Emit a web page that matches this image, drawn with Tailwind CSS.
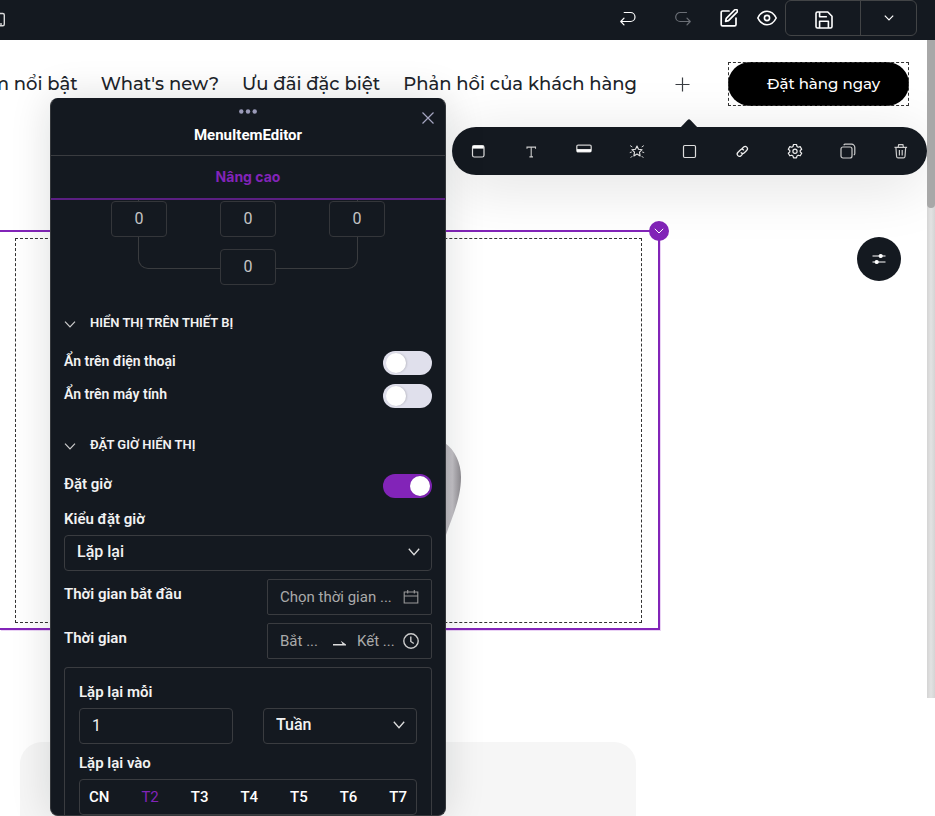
<!DOCTYPE html>
<html lang="vi">
<head>
<meta charset="utf-8">
<meta name="viewport" content="width=device-width, initial-scale=1">
<title>MenuItemEditor</title>
<script src="https://cdn.jsdelivr.net/npm/@tailwindcss/browser@4"></script>
</head>
<body class="relative flex h-screen flex-col overflow-hidden bg-white font-['Roboto',sans-serif] text-[#20242a]">

<!-- Top bar -->
<header class="flex h-10 shrink-0 items-center justify-between bg-[#141920] pr-[18px] text-white">
  <button type="button" aria-label="Thiết bị" class="-ml-4">
    <svg class="block h-4 w-[21px]" viewBox="0 0 21 16" fill="none" stroke="#d9d9d9" stroke-width="1.4"><rect x="8" y="1.500" width="12.3" height="12.3" rx="1.5"/><path d="M17 11v2"/></svg>
  </button>
  <div class="flex h-full items-start">
    <div class="flex h-9 items-center">
      <button type="button" aria-label="Hoàn tác" class="mr-[39px]">
        <svg class="block size-4" viewBox="0 0 16 16" fill="none" stroke="#fff" stroke-width="1.2" stroke-linecap="round" stroke-linejoin="round"><path d="M4.2 2.500h6.3a4.5 4.5 0 0 1 0 9H.8M4 8.2.8 11.5 4 14.8"/></svg>
      </button>
      <button type="button" aria-label="Làm lại" disabled class="mr-[29px]">
        <svg class="block size-4" viewBox="0 0 16 16" fill="none" stroke="#6b6f76" stroke-width="1.2" stroke-linecap="round" stroke-linejoin="round"><path d="M11.5 2.500H5.2a4.5 4.5 0 0 0 0 9h10M12 8.2l3.2 3.3L12 14.8"/></svg>
      </button>
      <button type="button" aria-label="Chỉnh sửa" class="mr-[19px]">
        <svg class="block size-[18px]" viewBox="0 0 18 18" fill="none" stroke="#fff" stroke-width="1.7" stroke-linecap="round" stroke-linejoin="round"><path d="M9 2H2.6a1.4 1.4 0 0 0-1.4 1.4v12A1.4 1.4 0 0 0 2.600 16.800h12a1.400 1.400 0 0 0 1.400-1.400V9"/><path d="M6.300 9.300 14.700.9a1.400 1.400 0 0 1 2.300 2.200L8.500 11.600l-2.900.7z"/></svg>
      </button>
      <button type="button" aria-label="Xem trước" class="mr-2">
        <svg class="block size-5" viewBox="0 0 20 20" fill="none" stroke="#fff" stroke-width="1.6"><path d="M.8 10C3 5.700 6.200 3.200 10 3.200s7 2.500 9.200 6.800c-2.200 4.300-5.400 6.800-9.200 6.800S3 14.300.8 10z"/><circle cx="10" cy="10" r="2.600"/></svg>
      </button>
    </div>
    <div class="flex h-9 w-[132px] rounded-md border border-[#424446]">
      <button type="button" aria-label="Lưu" class="flex w-[75px] items-center justify-center border-r border-[#424446] pl-[2px] pt-1">
        <svg class="block size-[18px]" viewBox="0 0 18 18" fill="none" stroke="#fff" stroke-width="1.600" stroke-linejoin="round"><path d="M2.500 1h10.300L17 5.200v10.300a1.500 1.500 0 0 1-1.500 1.500h-13A1.500 1.500 0 0 1 1 15.500v-13A1.500 1.500 0 0 1 2.500 1z"/><path d="M4.600 17v-6.800h8.800V17M4.600 1v4.800h7.300"/></svg>
      </button>
      <button type="button" aria-label="Tùy chọn lưu" class="flex flex-1 items-center justify-center">
        <svg class="block h-[6px] w-[10px]" viewBox="0 0 10 6" fill="none" stroke="#fff" stroke-width="1.200"><path d="m.8.700 4.200 4.300L9.200.700"/></svg>
      </button>
    </div>
  </div>
</header>

<main class="relative flex min-h-0 flex-1 flex-col overflow-hidden">
  <!-- Site menu -->
  <nav class="flex h-[66px] shrink-0 items-center justify-end pr-[26px] pt-[22px] font-['Montserrat','Inter',sans-serif] text-[18px] font-medium">
    <div class="flex gap-[23px] whitespace-nowrap">
      <a href="#">Sản phẩm nổi bật</a>
      <a href="#">What's new?</a>
      <a href="#">Ưu đãi đặc biệt</a>
      <a href="#">Phản hồi của khách hàng</a>
    </div>
    <button type="button" aria-label="Thêm mục" class="mx-[38px]">
      <svg class="block size-[15px]" viewBox="0 0 15 15" stroke="#3a3d42" stroke-width="1.200"><path d="M7.500.500v14M.500 7.500h14"/></svg>
    </button>
    <div class="outline-1 outline-dashed outline-[#333] -outline-offset-1">
      <button type="button" class="h-11 w-[181px] whitespace-nowrap rounded-full bg-black pl-[10px] text-[15px] text-white">Đặt hàng ngay</button>
    </div>
  </nav>

  <!-- Selected section -->
  <section class="relative mr-[275px] mt-[124px] shrink-0 border-y-2 border-r-2 border-[#8224b8] pb-[5px] pl-[15px] pr-4 pt-[6px] shadow-[1px_1px_0_#ead2f5]">
    <div class="flex h-[385px] items-center border border-dashed border-[#333]">
      <svg class="ml-[410px] mt-[118px] block h-[94px] w-9 shrink-0" viewBox="0 0 36 94">
        <defs><linearGradient id="g" x1="0" x2="1"><stop offset="0" stop-color="#a5a2a8"/><stop offset=".75" stop-color="#c4c1c6"/><stop offset="1" stop-color="#8e8c91"/></linearGradient></defs>
        <path d="M0 0h19c10 7 16 20 16 34 0 22-9 40-15 58H0z" fill="url(#g)"/>
      </svg>
    </div>
    <button type="button" aria-label="Mở rộng" class="absolute -right-[11px] -top-[11px] flex size-5 items-center justify-center rounded-full bg-[#8224b8]">
      <svg class="block h-[6px] w-[10px]" viewBox="0 0 10 6" fill="none" stroke="#fff"><path d="m.800.800 4.200 4.200L9.200.800"/></svg>
    </button>
  </section>

  <div class="ml-5 mr-[299px] mt-28 flex-1 rounded-t-[22px] bg-[#f6f6f6]"></div>

  <button type="button" aria-label="Cài đặt" class="absolute right-[34px] top-[197px] flex size-11 items-center justify-center rounded-full bg-[#141920]">
    <svg class="block h-3 w-[14px]" viewBox="0 0 14 12" stroke="#fff" stroke-width="1.200"><path d="M.500 3h13M.500 9h13"/><circle cx="8.700" cy="3" r="1.500" fill="#fff"/><circle cx="4.700" cy="9" r="1.500" fill="#fff"/></svg>
  </button>

  <!-- Element toolbar -->
  <div role="toolbar" aria-label="Công cụ" class="absolute right-2 top-[87px] grid h-12 w-[475px] grid-cols-9 items-center justify-items-center rounded-full bg-[#141920] shadow-[0_10px_60px_rgba(0,0,0,0.13)]">
    <svg class="absolute -top-2 left-[228px] h-[9px] w-[18px]" viewBox="0 0 18 9" fill="#141920"><path d="M0 9 7.600 1a2 2 0 0 1 2.800 0L18 9z"/></svg>
    <button type="button" aria-label="Khung"><svg class="block size-4" viewBox="0 0 16 16" fill="none" stroke="#ddd" stroke-width="1.200"><rect x="2.500" y="2.500" width="11.500" height="11.500" rx="1.800"/><path d="M2.700 4.200h11" stroke="#fff" stroke-width="2.800"/></svg></button>
    <button type="button" aria-label="Văn bản"><svg class="block size-4" viewBox="0 0 16 16" fill="none" stroke="#ccc" stroke-width="1.100"><path d="M4 5.700V4.100h8.500v1.600M8.200 4.100v9.800M6.400 13.900h3.600"/></svg></button>
    <button type="button" aria-label="Nút"><svg class="block size-4" viewBox="0 0 16 16" fill="none" stroke="#ccc" stroke-width="1.300"><rect x=".8" y="2.200" width="14.400" height="6.600" rx="1.300"/><path d="M1 7.500h14" stroke="#fff" stroke-width="2.800"/></svg></button>
    <button type="button" aria-label="Hiệu ứng"><svg class="block size-4" viewBox="0 0 16 16" fill="none" stroke="#e5e5e5" stroke-linejoin="round"><path d="m8 3 1.500 3.200 3.600.5-2.600 2.500.6 3.700L8 11.100l-3.100 1.800.6-3.700-2.600-2.500 3.600-.5z" stroke-width="1.100"/><path d="M1.200 2.600 3.300 4M14.800 2.600 12.700 4M.8 9.600l2-.6M15.200 9.600l-2-.6M1.600 14.800l1.700-1.700M14.400 14.800l-1.700-1.700" stroke-width=".9"/></svg></button>
    <button type="button" aria-label="Viền"><svg class="block size-4" viewBox="0 0 16 16" fill="none" stroke="#ddd" stroke-width="1.200"><rect x="2.500" y="2.500" width="12" height="12" rx="1.200"/></svg></button>
    <button type="button" aria-label="Liên kết"><svg class="block size-4" viewBox="0 0 24 24" fill="none" stroke="#eee" stroke-width="1.900" stroke-linecap="round"><path d="m11.500 9 3-3a3.400 3.400 0 0 1 4.800 4.800l-3.800 3.800a3.400 3.400 0 0 1-4.800 0M13.500 16l-3 3a3.400 3.400 0 0 1-4.800-4.800l3.800-3.800a3.400 3.400 0 0 1 4.800 0"/></svg></button>
    <button type="button" aria-label="Thiết lập"><svg class="block size-4" viewBox="0 0 16 16" fill="none" stroke="#eee" stroke-width="1.200" stroke-linejoin="round"><path d="M6.500 1.500h3l.5 2 1.200.7 2-.6 1.500 2.600-1.500 1.300v1.400l1.500 1.300-1.500 2.600-2-.6-1.200.7-.5 2h-3l-.5-2-1.200-.7-2 .6-1.500-2.600 1.500-1.300V7.500L1.300 6.200l1.500-2.600 2 .6L6 3.500z"/><circle cx="8" cy="8.200" r="2.100"/></svg></button>
    <button type="button" aria-label="Nhân bản"><svg class="block size-4" viewBox="0 0 16 16" fill="none" stroke="#ccc" stroke-width="1.200"><rect x="1" y="4" width="11" height="11" rx="2"/><path d="M3.800 2.300c.300-.8.800-1.100 1.500-1.100H11.500A3.200 3.200 0 0 1 14.800 4.400v6c0 .8-.3 1.300-1 1.700"/></svg></button>
    <button type="button" aria-label="Xóa"><svg class="block size-4" viewBox="0 0 16 16" fill="none" stroke="#ccc" stroke-width="1.200"><path d="M1.500 4.300h12.600M5.200 4 5.700 1.600h4.200l.5 2.400M2.900 4.300l.7 9.200c.1.900.6 1.400 1.500 1.400h5.400c.9 0 1.400-.5 1.500-1.400l.7-9.200M6.400 7v5.500M9.200 7v5.500"/></svg></button>
  </div>

  <!-- Scrollbar -->
  <div class="absolute right-0 top-0 h-[658px] w-2 bg-linear-to-r from-[#d4d4d4] via-[#e2e2e2] to-[#d4d4d4]">
    <div class="h-[168px] rounded-b-full bg-[#a8a8a8]"></div>
  </div>
</main>

<!-- Floating editor panel -->
<aside class="absolute bottom-0 left-[50px] top-[98px] flex w-[396px] flex-col overflow-hidden rounded-lg border border-[#35383c] border-t-[#141920] bg-[#141920] text-[15px] text-[#f2f2f2] shadow-[0_0_40px_rgba(0,20,20,0.14)]">
  <div class="relative flex h-[57px] shrink-0 flex-col items-center border-b border-[#3a3c40] pt-[10px]">
    <svg class="block h-[5px] w-[18px]" viewBox="0 0 18 5" fill="#9a9ab8"><circle cx="2.300" cy="2.500" r="2.200"/><circle cx="9" cy="2.500" r="2.200"/><circle cx="15.700" cy="2.500" r="2.200"/></svg>
    <h2 class="mt-[11px] font-bold leading-5 text-white">MenuItemEditor</h2>
    <button type="button" aria-label="Đóng" class="absolute right-[11px] top-[13px]">
      <svg class="block size-3" viewBox="0 0 12 12" stroke="#a5a5c0" stroke-width="1.200"><path d="m.500.500 11 11M11.500.500l-11 11"/></svg>
    </button>
  </div>
  <button type="button" class="h-11 shrink-0 border-b-2 border-[#5b1f82] pb-[2px] font-['Inter',sans-serif] text-[14px] font-bold text-[#8224b8]">Nâng cao</button>

  <div class="min-h-0 flex-1 overflow-hidden px-[13px]">
    <!-- Spacing box -->
    <div class="relative mx-auto grid w-[274px] grid-cols-[56px_56px_56px] justify-between gap-y-3 pt-px text-[16px] text-[#c4c4c4]">
      <div class="absolute inset-x-[27px] bottom-4 top-0 rounded-b-[10px] border border-t-0 border-[#3a3c3f]"></div>
      <input aria-label="Trái" value="0" class="relative h-9 w-14 rounded-[4px] border border-[#34363a] bg-[#141920] pb-[2px] text-center">
      <input aria-label="Trên" value="0" class="relative h-9 w-14 rounded-[4px] border border-[#34363a] bg-[#141920] pb-[2px] text-center">
      <input aria-label="Phải" value="0" class="relative h-9 w-14 rounded-[4px] border border-[#34363a] bg-[#141920] pb-[2px] text-center">
      <input aria-label="Dưới" value="0" class="relative col-start-2 h-9 w-14 rounded-[4px] border border-[#34363a] bg-[#141920] pb-[2px] text-center">
    </div>

    <h3 class="mt-7 flex h-5 items-center gap-[14px] text-[13px] font-semibold">
      <svg class="mt-[3px] block h-[7px] w-3" viewBox="0 0 12 7" fill="none" stroke="#ccc" stroke-width="1.200"><path d="m1 .700 5 5.300 5-5.300"/></svg>HIỂN THỊ TRÊN THIẾT BỊ
    </h3>
    <div class="mt-[18px] flex h-6 items-center justify-between">
      <label for="phone" class="pb-[3px] text-[14px] font-semibold">Ẩn trên điện thoại</label>
      <input id="phone" type="checkbox" class="h-6 w-[49px] appearance-none rounded-full bg-[#e0e0ec] p-[2px] pl-[3px] before:block before:size-5 before:rounded-full before:bg-white before:shadow-[1px_0_2px_rgba(0,0,0,0.15)] checked:bg-[#8224b8] checked:pl-[27px]">
    </div>
    <div class="mt-[9px] flex h-6 items-center justify-between">
      <label for="desktop" class="pb-[3px] text-[14px] font-semibold">Ẩn trên máy tính</label>
      <input id="desktop" type="checkbox" class="h-6 w-[49px] appearance-none rounded-full bg-[#e0e0ec] p-[2px] pl-[3px] before:block before:size-5 before:rounded-full before:bg-white before:shadow-[1px_0_2px_rgba(0,0,0,0.15)] checked:bg-[#8224b8] checked:pl-[27px]">
    </div>

    <h3 class="mt-[27px] flex h-5 items-center gap-[14px] text-[13px] font-semibold">
      <svg class="mt-[3px] block h-[7px] w-3" viewBox="0 0 12 7" fill="none" stroke="#ccc" stroke-width="1.200"><path d="m1 .700 5 5.300 5-5.300"/></svg>ĐẶT GIỜ HIỂN THỊ
    </h3>
    <div class="mt-[19px] flex h-6 items-center justify-between">
      <label for="schedule" class="pb-[3px] font-semibold">Đặt giờ</label>
      <input id="schedule" type="checkbox" checked class="h-6 w-[49px] appearance-none rounded-full bg-[#e0e0ec] p-[2px] before:block before:size-5 before:rounded-full before:bg-white before:shadow-[1px_0_2px_rgba(0,0,0,0.15)] checked:bg-[#8224b8] checked:pl-[27px]">
    </div>
    <label for="kind" class="mt-[11px] block font-semibold leading-5">Kiểu đặt giờ</label>
    <div class="relative mt-[6px]">
      <select id="kind" class="block h-9 w-full appearance-none rounded-[4px] border border-[#3a3c40] px-3 pb-[2px] text-[16px] font-medium"><option>Lặp lại</option></select>
      <svg class="pointer-events-none absolute right-3 top-[13px] h-[8px] w-3" viewBox="0 0 12 8" fill="none" stroke="#ddd" stroke-width="1.300"><path d="m.800.800 5.200 6 5.200-6"/></svg>
    </div>
    <div class="mt-2 flex items-start justify-between">
      <label for="start" class="pt-[5px] font-semibold leading-5">Thời gian bắt đầu</label>
      <div class="flex h-9 w-[165px] items-center justify-between rounded-[2px] border border-[#3a3c40] px-3">
        <input id="start" placeholder="Chọn thời gian ..." class="w-[119px] text-[15px] placeholder:text-[#aaa]">
        <svg class="block size-4 shrink-0" viewBox="0 0 16 16" fill="none" stroke="#999" stroke-width="1.100"><path d="M1.200 3h13.600v11H1.200zM1.200 7h13.600M4.700 1v3.600M11.300 1v3.600"/></svg>
      </div>
    </div>
    <div class="mt-2 flex items-start justify-between">
      <label for="from" class="pt-[5px] font-semibold leading-5">Thời gian</label>
      <div class="flex h-9 w-[165px] items-center rounded-[2px] border border-[#3a3c40] px-3">
        <input id="from" placeholder="Bắt ..." class="w-[53px] text-[15px] placeholder:text-[#aaa]">
        <svg class="mt-1 mr-[11px] block h-[6px] w-[13px] shrink-0" viewBox="0 0 13 6" fill="#ddd"><path d="M0 4h9.500L7.800.800 13 4.500V5.500H0z"/></svg>
        <input aria-label="Kết thúc" placeholder="Kết ..." class="w-[46px] text-[15px] placeholder:text-[#aaa]">
        <svg class="block size-4 shrink-0" viewBox="0 0 16 16" fill="none" stroke="#ccc" stroke-width="1.400"><circle cx="8" cy="8" r="7.200"/><path d="M7.800 3.500v5l3 2"/></svg>
      </div>
    </div>

    <div class="mt-2 rounded-t-[4px] border border-b-0 border-[#3a3c40] px-[14px] pb-4 pt-[14px]">
      <div class="grid grid-cols-2 gap-x-[30px]">
        <label for="every" class="col-span-2 font-semibold leading-5">Lặp lại mỗi</label>
        <input id="every" value="1" class="mt-[6px] h-9 w-full rounded-[4px] border border-[#3a3c40] px-3 pb-[2px] text-[16px]">
        <div class="relative mt-[6px]">
          <select aria-label="Đơn vị" class="block h-9 w-full appearance-none rounded-[4px] border border-[#3a3c40] px-3 pb-[2px] text-[16px] font-medium"><option>Tuần</option></select>
          <svg class="pointer-events-none absolute right-3 top-[13px] h-[8px] w-3" viewBox="0 0 12 8" fill="none" stroke="#ddd" stroke-width="1.300"><path d="m.800.800 5.200 6 5.200-6"/></svg>
        </div>
      </div>
      <p id="days" class="mt-[9px] font-semibold leading-5">Lặp lại vào</p>
      <div role="group" aria-labelledby="days" class="mt-[6px] flex h-9 items-center justify-between rounded-[4px] border border-[#3a3c40] px-[9px] text-[15px] font-medium text-white">
        <button type="button">CN</button>
        <button type="button" aria-pressed="true" class="font-normal text-[#8224b8]">T2</button>
        <button type="button">T3</button>
        <button type="button">T4</button>
        <button type="button">T5</button>
        <button type="button">T6</button>
        <button type="button">T7</button>
      </div>
    </div>
  </div>
</aside>
</body>
</html>
